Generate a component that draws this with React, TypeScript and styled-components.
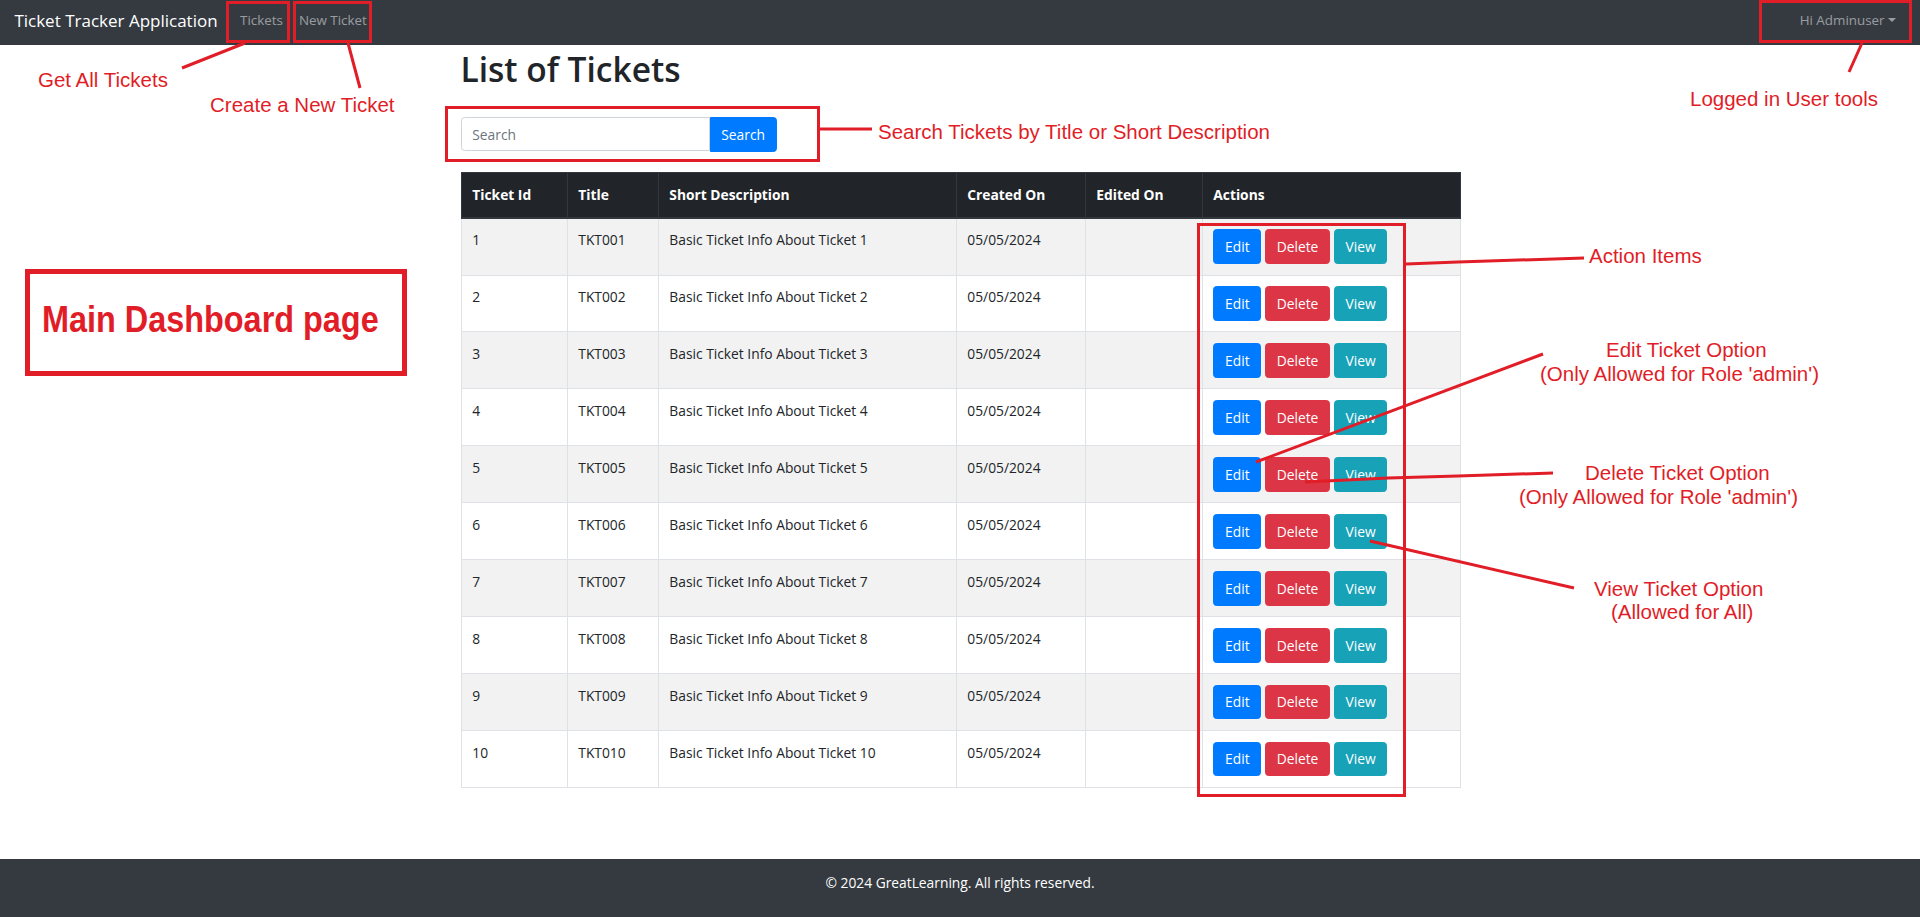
import React from "react";
import styled, { createGlobalStyle } from "styled-components";

const RED = "#e11d27";

const GlobalStyle = createGlobalStyle`
  *, *::before, *::after { box-sizing: border-box; }
  html, body { margin: 0; padding: 0; background: #fff; }
  body {
    font-family: "Open Sans", "Noto Sans", sans-serif;
    font-size: 13.8px;
    line-height: 1.5;
    color: #212529;
  }
`;

const Page = styled.div`
  position: relative;
  min-height: 100vh;
  display: flex;
  flex-direction: column;
  overflow: hidden;
`;

/* ---------- navbar ---------- */
const NavBar = styled.nav`
  flex: none;
  height: 45px;
  display: flex;
  align-items: center;
  padding: 0 16px 4px 14.4px;
  background: #343a40;
`;

const Brand = styled.span`
  margin-right: 14.4px;
  font-size: 17px;
  line-height: 1.5;
  color: #fff;
  white-space: nowrap;
`;

const NavItem = styled.span`
  padding: 0 8px;
  font-size: 13.4px;
  line-height: 1.5;
  color: rgba(255, 255, 255, 0.5);
  white-space: nowrap;
`;

const NavSpacer = styled.div`
  flex: 1;
`;

const Caret = styled.span`
  display: inline-block;
  margin-left: 0.255em;
  vertical-align: 0.255em;
  border-top: 0.3em solid;
  border-left: 0.3em solid transparent;
  border-right: 0.3em solid transparent;
`;

/* ---------- main ---------- */
const Main = styled.main`
  flex: 1;
  padding-top: 4px;
`;

const Container = styled.div`
  width: 999px;
  margin: 0 auto;
`;

const Title = styled.h1`
  margin: 0 0 28px;
  font-size: 33.5px;
  font-weight: 600;
  line-height: 1.2;
  color: #212529;
`;

const SearchForm = styled.form`
  display: flex;
  margin: 0 0 20.8px;
`;

const SearchInput = styled.input`
  width: 249px;
  height: 34.2px;
  padding: 5.4px 10.8px;
  border: 0.9px solid #ced4da;
  border-radius: 3.6px 0 0 3.6px;
  font-family: inherit;
  font-size: 13.8px;
  color: #495057;
  background: #fff;
  outline: none;
  &::placeholder {
    color: #6c757d;
  }
`;

const tones = {
  primary: "#007bff",
  danger: "#dc3545",
  info: "#17a2b8",
} as const;

type Tone = keyof typeof tones;

const Btn = styled.button<{ $tone: Tone; $attached?: boolean }>`
  padding: 5.4px 10.8px;
  border: 0.9px solid ${(p) => tones[p.$tone]};
  border-radius: ${(p) => (p.$attached ? "0 3.6px 3.6px 0" : "3.6px")};
  background: ${(p) => tones[p.$tone]};
  color: #fff;
  font-family: inherit;
  font-size: 13.8px;
  line-height: 21.6px;
  cursor: pointer;
`;

const Table = styled.table`
  width: 999px;
  border-collapse: collapse;
  table-layout: fixed;
  font-size: 13.8px;
`;

const HeadCell = styled.th<{ $w: number }>`
  width: ${(p) => p.$w}px;
  padding: 10.8px;
  border: 1px solid #32383e;
  border-bottom-width: 2px;
  background: #212529;
  color: #fff;
  font-weight: 700;
  line-height: 21.6px;
  text-align: left;
  vertical-align: bottom;
`;

const Row = styled.tr`
  &:nth-child(odd) {
    background: rgba(0, 0, 0, 0.05);
  }
`;

const Cell = styled.td`
  padding: 10.8px;
  border: 1px solid #dee2e6;
  line-height: 21.6px;
  vertical-align: top;
  white-space: nowrap;
`;

const Actions = styled.div`
  display: flex;
  gap: 3.5px;
`;

/* ---------- footer ---------- */
const Footer = styled.footer`
  flex: none;
  height: 58px;
  padding-top: 14.4px;
  background: #343a40;
  color: #fff;
  text-align: center;
  font-size: 13.8px;
  line-height: 20.7px;
`;

/* ---------- annotations ---------- */
const Overlay = styled.svg`
  position: absolute;
  left: 0;
  top: 0;
  width: 1920px;
  height: 917px;
  pointer-events: none;
`;

const Note = styled.div<{ $x: number; $y: number }>`
  position: absolute;
  left: ${(p) => p.$x}px;
  top: ${(p) => p.$y}px;
  font-family: "Liberation Sans", Arial, sans-serif;
  font-size: 20.5px;
  line-height: 24px;
  color: ${RED};
  white-space: nowrap;
  pointer-events: none;
`;

const PageBadge = styled.div`
  position: absolute;
  left: 25px;
  top: 269px;
  width: 382px;
  height: 107px;
  padding: 27.5px 0 0 12px;
  border: 5px solid ${RED};
  font-family: "Liberation Sans", Arial, sans-serif;
  font-size: 36px;
  font-weight: 700;
  line-height: 36px;
  color: ${RED};
  white-space: nowrap;
`;

const BadgeText = styled.span`
  display: inline-block;
  transform: scaleX(0.9);
  transform-origin: left center;
`;

const columns: [string, number][] = [
  ["Ticket Id", 106],
  ["Title", 91],
  ["Short Description", 298],
  ["Created On", 129],
  ["Edited On", 117],
  ["Actions", 258],
];

const tickets = Array.from({ length: 10 }, (_, i) => {
  const n = i + 1;
  return {
    id: n,
    title: `TKT${String(n).padStart(3, "0")}`,
    desc: `Basic Ticket Info About Ticket ${n}`,
    created: "05/05/2024",
    edited: "",
  };
});

const boxes = [
  { x: 226, y: 1, w: 64, h: 42 },
  { x: 293, y: 1, w: 79, h: 42 },
  { x: 1759, y: 0, w: 153, h: 43 },
  { x: 445, y: 106, w: 375, h: 56 },
  { x: 1197, y: 223, w: 209, h: 574 },
];

const lines = [
  "182,68 245,43",
  "348,43 360,88",
  "1862,43 1849,72",
  "820,129 872,129",
  "1406,264 1458,262 1584,258",
  "1256,462 1543,354",
  "1305,482 1388,478 1458,476 1553,473",
  "1370,541 1574,588",
];

const notes: { x: number; y: number; text: string }[] = [
  { x: 38, y: 68, text: "Get All Tickets" },
  { x: 210, y: 93, text: "Create a New Ticket" },
  { x: 878, y: 120, text: "Search Tickets by Title or Short Description" },
  { x: 1690, y: 87, text: "Logged in User tools" },
  { x: 1589, y: 244, text: "Action Items" },
  { x: 1606, y: 338, text: "Edit Ticket Option" },
  { x: 1540, y: 362, text: "(Only Allowed for Role 'admin')" },
  { x: 1585, y: 461, text: "Delete Ticket Option" },
  { x: 1519, y: 485, text: "(Only Allowed for Role 'admin')" },
  { x: 1594, y: 577, text: "View Ticket Option" },
  { x: 1611, y: 600, text: "(Allowed for All)" },
];

export default function App() {
  return (
    <Page>
      <GlobalStyle />
      <NavBar>
        <Brand>Ticket Tracker Application</Brand>
        <NavItem>Tickets</NavItem>
        <NavItem>New Ticket</NavItem>
        <NavSpacer />
        <NavItem>
          Hi Adminuser
          <Caret />
        </NavItem>
      </NavBar>

      <Main>
        <Container>
          <Title>List of Tickets</Title>
          <SearchForm onSubmit={(e) => e.preventDefault()}>
            <SearchInput placeholder="Search" />
            <Btn $tone="primary" $attached type="submit">
              Search
            </Btn>
          </SearchForm>
          <Table>
            <thead>
              <tr>
                {columns.map(([label, w]) => (
                  <HeadCell key={label} $w={w}>
                    {label}
                  </HeadCell>
                ))}
              </tr>
            </thead>
            <tbody>
              {tickets.map((t) => (
                <Row key={t.id}>
                  <Cell>{t.id}</Cell>
                  <Cell>{t.title}</Cell>
                  <Cell>{t.desc}</Cell>
                  <Cell>{t.created}</Cell>
                  <Cell>{t.edited}</Cell>
                  <Cell>
                    <Actions>
                      <Btn $tone="primary">Edit</Btn>
                      <Btn $tone="danger">Delete</Btn>
                      <Btn $tone="info">View</Btn>
                    </Actions>
                  </Cell>
                </Row>
              ))}
            </tbody>
          </Table>
        </Container>
      </Main>

      <Footer>© 2024 GreatLearning. All rights reserved.</Footer>

      <Overlay viewBox="0 0 1920 917">
        {boxes.map((b, i) => (
          <rect
            key={i}
            x={b.x + 1.5}
            y={b.y + 1.5}
            width={b.w - 3}
            height={b.h - 3}
            fill="none"
            stroke={RED}
            strokeWidth={3}
          />
        ))}
        {lines.map((pts, i) => (
          <polyline key={i} points={pts} fill="none" stroke={RED} strokeWidth={3} />
        ))}
      </Overlay>
      {notes.map((n) => (
        <Note key={n.text + n.y} $x={n.x} $y={n.y}>
          {n.text}
        </Note>
      ))}
      <PageBadge>
        <BadgeText>Main Dashboard page</BadgeText>
      </PageBadge>
    </Page>
  );
}
